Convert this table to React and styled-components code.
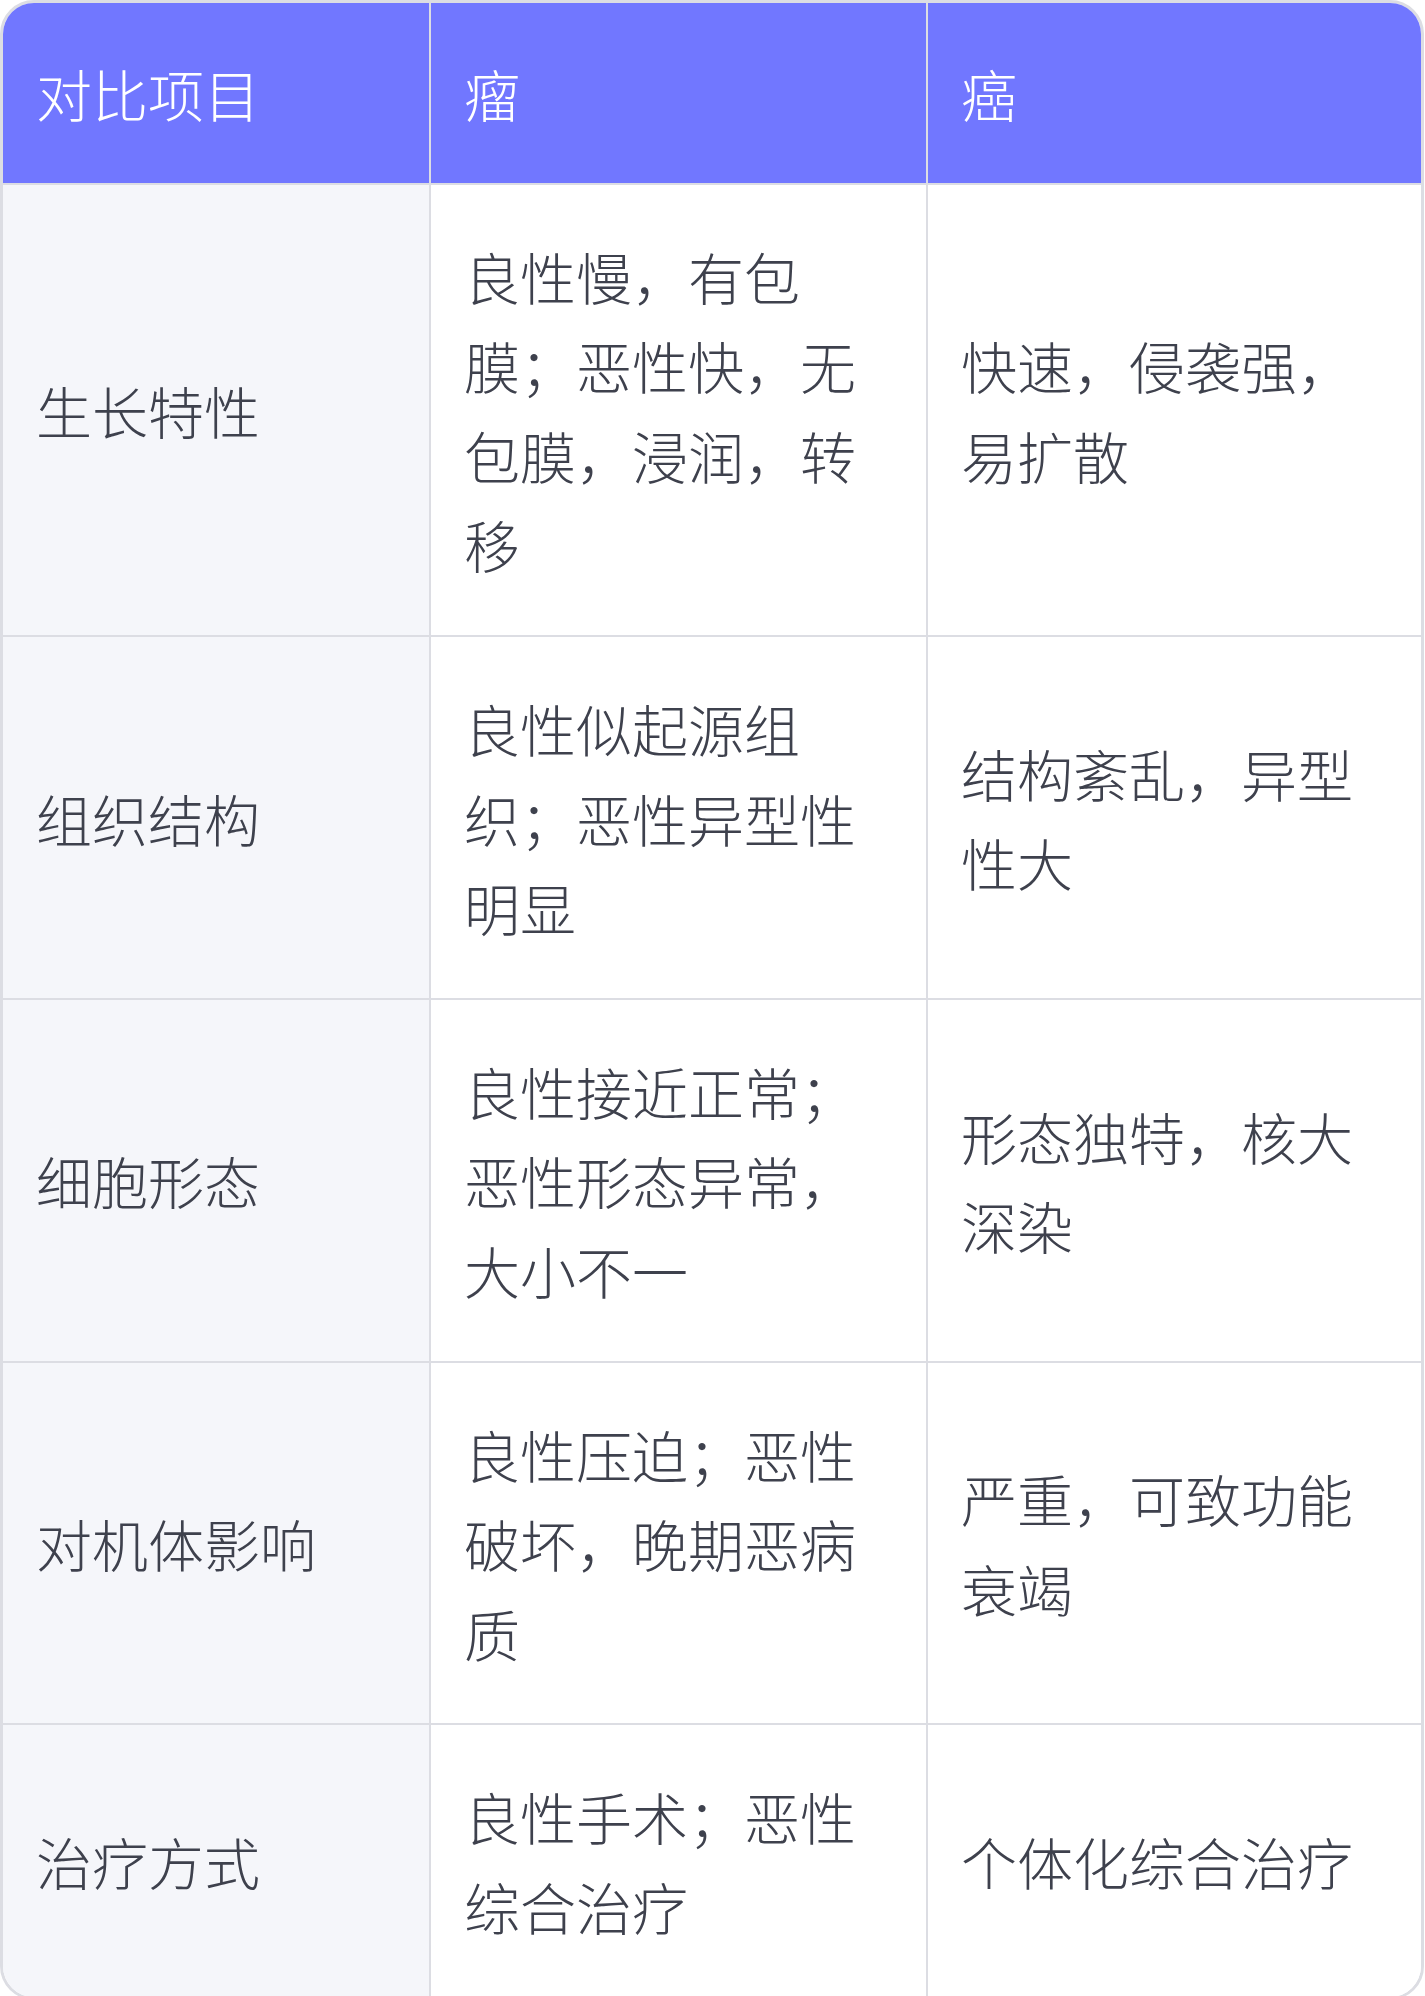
import React from "react";
import styled, { createGlobalStyle } from "styled-components";

const rows = [
  {
    item: "生长特性",
    tumor: "良性慢，有包膜；恶性快，无包膜，浸润，转移",
    cancer: "快速，侵袭强，易扩散",
  },
  {
    item: "组织结构",
    tumor: "良性似起源组织；恶性异型性明显",
    cancer: "结构紊乱，异型性大",
  },
  {
    item: "细胞形态",
    tumor: "良性接近正常；恶性形态异常，大小不一",
    cancer: "形态独特，核大深染",
  },
  {
    item: "对机体影响",
    tumor: "良性压迫；恶性破坏，晚期恶病质",
    cancer: "严重，可致功能衰竭",
  },
  {
    item: "治疗方式",
    tumor: "良性手术；恶性综合治疗",
    cancer: "个体化综合治疗",
  },
];

export default function App() {
  return (
    <>
      <GlobalStyle />
      <Table>
        <HeadCell>对比项目</HeadCell>
        <HeadCell>瘤</HeadCell>
        <HeadCell $last>癌</HeadCell>
        {rows.map((row, i) => {
          const lastRow = i === rows.length - 1;
          return (
            <React.Fragment key={row.item}>
              <Cell $label $lastRow={lastRow}>
                <span>{row.item}</span>
              </Cell>
              <Cell $lastRow={lastRow}>
                <span>{row.tumor}</span>
              </Cell>
              <Cell $last $lastRow={lastRow}>
                <span>{row.cancer}</span>
              </Cell>
            </React.Fragment>
          );
        })}
      </Table>
    </>
  );
}

const GlobalStyle = createGlobalStyle`
  body {
    margin: 0;
    background: #ffffff;
    font-family: "Noto Sans CJK SC", "Noto Sans", sans-serif;
  }
  * {
    box-sizing: border-box;
  }
`;

const Table = styled.div`
  width: 1424px;
  display: grid;
  grid-template-columns: 428px 497px 1fr;
  border: 3px solid #dcdde3;
  border-radius: 34px;
  overflow: hidden;
  font-size: 56px;
  font-weight: 300;
  line-height: 1.6;
`;

const HeadCell = styled.div`
  background-color: #7177ff;
  color: #ffffff;
  padding: 45px 33px;
  border-bottom: 2px solid #dcdde3;
  border-right: ${(p) => (p.$last ? "none" : "2px solid #dcdde3")};
`;

const Cell = styled.div`
  display: flex;
  align-items: center;
  padding: 46px 33px;
  color: #3e414d;
  background-color: ${(p) => (p.$label ? "#f5f6fa" : "#ffffff")};
  border-right: ${(p) => (p.$last ? "none" : "2px solid #dcdde3")};
  border-bottom: ${(p) => (p.$lastRow ? "none" : "2px solid #dcdde3")};
`;
